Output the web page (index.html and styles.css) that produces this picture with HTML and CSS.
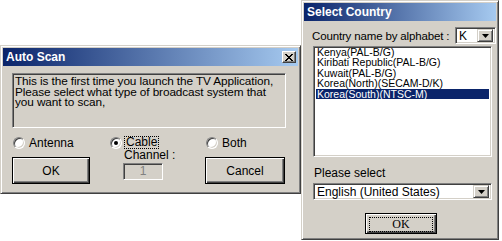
FILE: index.html
```html
<!DOCTYPE html>
<html lang="en">
<head>
    <meta charset="utf-8">
    <link rel="stylesheet" href="styles.css">
</head>
<body>
    <div class="desk">

        <!-- Auto Scan dialog -->
        <div class="window scan">
            <div class="titlebar">
                <span>Auto Scan</span>
                <span class="close">
                    <svg width="8" height="7" viewBox="0 0 8 7"><path d="M0 0L7 7M1 0L8 7M7 0L0 7M8 0L1 7" stroke="#000" stroke-width="1"/></svg>
                </span>
            </div>
            <div class="scan-body">
                <div class="message">
                    <div class="line">This is the first time you launch the TV Application,</div>
                    <div class="line">Please select what type of broadcast system that</div>
                    <div class="line">you want to scan,</div>
                </div>
                <div class="choices">
                    <div class="col col-antenna">
                        <label class="radio"><span class="dot"></span>Antenna</label>
                        <button class="btn" type="button">OK</button>
                    </div>
                    <div class="col col-cable">
                        <label class="radio"><span class="dot checked"></span><span class="focus">Cable</span></label>
                        <div class="channel-label">Channel :</div>
                        <div class="channel-field">1</div>
                    </div>
                    <div class="col col-both">
                        <label class="radio"><span class="dot"></span>Both</label>
                        <button class="btn" type="button">Cancel</button>
                    </div>
                </div>
            </div>
        </div>

        <!-- Select Country dialog -->
        <div class="window country">
            <div class="titlebar"><span>Select Country</span></div>
            <div class="country-body">
                <div class="alpha-row">
                    <span class="alpha-label">Country name by alphabet :</span>
                    <div class="combo combo-small">
                        <span class="combo-text">K</span>
                        <span class="drop"><svg width="7" height="4" viewBox="0 0 7 4"><path d="M0 0H7L3.5 4Z" fill="#000"/></svg></span>
                    </div>
                </div>
                <div class="listbox">
                    <div class="item">Kenya(PAL-B/G)</div>
                    <div class="item">Kiribati Republic(PAL-B/G)</div>
                    <div class="item">Kuwait(PAL-B/G)</div>
                    <div class="item">Korea(North)(SECAM-D/K)</div>
                    <div class="item selected">Korea(South)(NTSC-M)</div>
                </div>
                <div class="select-label">Please select</div>
                <div class="combo combo-wide">
                    <span class="combo-text">English (United States)</span>
                    <span class="drop"><svg width="7" height="4" viewBox="0 0 7 4"><path d="M0 0H7L3.5 4Z" fill="#000"/></svg></span>
                </div>
                <button class="btn btn-ok" type="button"><span class="focus-box">OK</span></button>
            </div>
        </div>

    </div>
</body>
</html>
```

FILE: styles.css
```css
body {
    margin: 0;
    background: #fff;
    font-family: "Liberation Sans", Arial, sans-serif;
    font-size: 12px;
    color: #000;
}

.desk {
    position: relative;
    width: 502px;
    height: 241px;
}

/* classic raised window frame */
.window {
    position: absolute;
    box-sizing: border-box;
    background: #d4d0c8;
    border: 1px solid;
    border-color: #d4d0c8 #404040 #404040 #d4d0c8;
    box-shadow: inset 1px 1px #fff, inset -1px -1px #808080;
    padding: 2px;
}

.scan { left: 0; top: 45px; width: 301px; height: 149px; }
.country { left: 301px; top: 0; width: 198px; height: 240px; }

.titlebar {
    height: 18px;
    display: flex;
    align-items: center;
    justify-content: space-between;
    padding: 0 2px 0 3px;
    background: linear-gradient(to right, #0a246a, #a6caf0);
    color: #fff;
    font-weight: bold;
    font-size: 12px;
}

.close {
    width: 14px;
    height: 12px;
    box-sizing: border-box;
    display: flex;
    align-items: center;
    justify-content: center;
    background: #d4d0c8;
    border: 1px solid;
    border-color: #fff #404040 #404040 #fff;
    box-shadow: inset -1px -1px #808080;
}

/* ---- Auto Scan ---- */
.scan-body { padding: 7px 0 0 9px; }

.message {
    width: 274px;
    height: 55px;
    box-sizing: border-box;
    border: 1px solid;
    border-color: #808080 #fff #fff #808080;
    box-shadow: inset 1px 1px #404040, inset -1px -1px #d4d0c8;
    padding: 2px 2px;
    letter-spacing: -0.1px;
}
.line { height: 10.7px; line-height: 11px; font-size: 11.8px; white-space: nowrap; }

.choices { display: flex; margin-top: 8px; }
.col { display: flex; flex-direction: column; }
.col-antenna { width: 78px; margin-right: 20px; }
.col-cable { width: 95px; }
.col-both { width: 80px; }

.radio {
    height: 13px;
    display: flex;
    align-items: center;
    gap: 3px;
    line-height: 12px;
}
.col-antenna .radio, .col-both .radio { padding-left: 1px; gap: 4px; }

.dot {
    width: 12px;
    height: 12px;
    box-sizing: border-box;
    border-radius: 50%;
    border: 1px solid;
    border-color: #808080 #fff #fff #808080;
    box-shadow: inset 1px 1px #404040, inset -1px -1px #d4d0c8;
    background: #fff;
    display: flex;
    align-items: center;
    justify-content: center;
}
.dot.checked::after {
    content: "";
    width: 4px;
    height: 4px;
    border-radius: 50%;
    background: #000;
}

.focus { outline: 1px dotted #000; outline-offset: 0; padding: 0 1px; line-height: 11px; }

.btn {
    box-sizing: border-box;
    background: #d4d0c8;
    font-family: "Liberation Sans", Arial, sans-serif;
    font-size: 12px;
    color: #000;
    border: 1px solid #000;
    box-shadow: inset 1px 1px #fff, inset -1px -1px #404040, inset -2px -2px #808080;
    padding: 0;
}
.col .btn { height: 27px; margin-top: 8px; }
.col-antenna .btn { width: 78px; }
.col-both .btn { width: 80px; }

.channel-label { margin: 1px 0 0 14px; height: 11px; line-height: 11px; }

.channel-field {
    width: 40px;
    height: 17px;
    box-sizing: border-box;
    margin: 2px 0 0 13px;
    border: 1px solid;
    border-color: #808080 #fff #fff #808080;
    box-shadow: inset 1px 1px #404040, inset -1px -1px #d4d0c8;
    color: #808080;
    text-align: center;
    line-height: 15px;
}

/* ---- Select Country ---- */
.country-body { padding: 6px 0 0 8px; display: flex; flex-direction: column; }

.alpha-row {
    display: flex;
    align-items: center;
    justify-content: space-between;
    height: 17px;
}
.alpha-label { white-space: nowrap; font-size: 11.5px; letter-spacing: -0.15px; }

.combo {
    box-sizing: border-box;
    height: 17px;
    display: flex;
    align-items: center;
    justify-content: space-between;
    background: #fff;
    border: 1px solid;
    border-color: #808080 #fff #fff #808080;
    box-shadow: inset 1px 1px #404040, inset -1px -1px #d4d0c8;
    padding: 2px;
}
.combo-small { width: 41px; flex: none; }
.combo-wide { width: 179px; margin: 4px 0 0 1px; }
.combo-text { padding-left: 1px; line-height: 12px; }

.drop {
    width: 16px;
    height: 13px;
    box-sizing: border-box;
    display: flex;
    align-items: center;
    justify-content: center;
    background: #d4d0c8;
    border: 1px solid;
    border-color: #d4d0c8 #404040 #404040 #d4d0c8;
    box-shadow: inset 1px 1px #fff, inset -1px -1px #808080;
}

.listbox {
    width: 179px;
    height: 111px;
    box-sizing: border-box;
    margin: 2px 0 0 1px;
    background: #fff;
    border: 1px solid;
    border-color: #808080 #fff #fff #808080;
    box-shadow: inset 1px 1px #404040, inset -1px -1px #d4d0c8;
    padding: 0 2px;
    font-size: 10.5px;
}
.item { height: 10.4px; line-height: 10.4px; white-space: nowrap; padding-left: 1px; }
.item.selected { background: #0a246a; color: #fff; }

.select-label { margin: 10px 0 0 2px; line-height: 12px; }

.btn-ok {
    width: 72px;
    height: 21px;
    margin: 13px 0 0 53px;
    padding: 3px;
    font-family: "Liberation Serif", "Times New Roman", serif;
}
.focus-box {
    display: block;
    height: 13px;
    line-height: 13px;
    border: 1px dotted #000;
}
```
